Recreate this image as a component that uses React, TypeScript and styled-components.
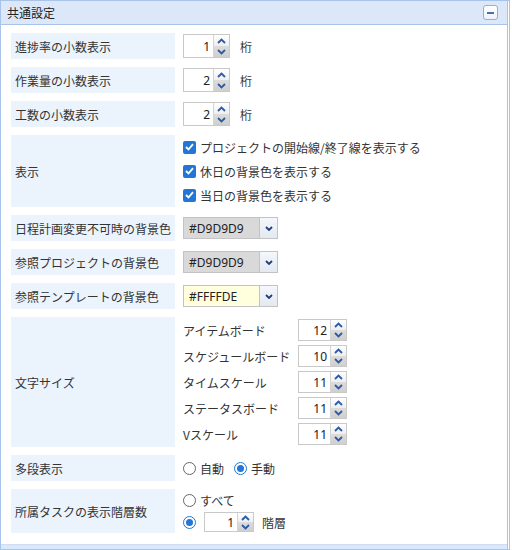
import React from 'react';
import styled, { createGlobalStyle } from 'styled-components';

const GlobalStyle = createGlobalStyle`
    body {
        margin: 0;
        background: #ffffff;
        font-family: "Noto Sans CJK JP", "Noto Sans", sans-serif;
        font-size: 12px;
        color: #333333;
    }
`;

const Panel = styled.div`
    width: 510px;
    height: 550px;
    box-sizing: border-box;
    border: 1px solid #a9c4ea;
    border-right: 3px double #a9c4ea;
    display: flex;
    flex-direction: column;
    background: #ffffff;
`;

const Header = styled.div`
    height: 23px;
    background: #dce8f8;
    border-bottom: 1px solid #a9c4ea;
    display: flex;
    align-items: center;
    justify-content: space-between;
    padding: 0 9px 0 6px;
    font-size: 12px;
    color: #222;
`;

const CollapseButton = styled.div`
    width: 13px;
    height: 13px;
    border: 1px solid #8fb0dd;
    border-radius: 3px;
    background: linear-gradient(#ffffff, #eef3fb);
    display: flex;
    align-items: center;
    justify-content: center;

    &::after {
        content: '';
        width: 7px;
        height: 2px;
        background: #4a6ea8;
    }
`;

const Body = styled.div`
    flex: 1;
    display: flex;
    flex-direction: column;
    gap: 8px;
    padding: 8px 0 0 10px;
`;

const Footer = styled.div`
    height: 4px;
    background: #dce8f8;
    border-top: 1px solid #cfdef3;
`;

const Row = styled.div`
    display: grid;
    grid-template-columns: 164px auto;
    column-gap: 8px;
`;

const Label = styled.div<{ h: number }>`
    height: ${p => p.h}px;
    background: #ebf3fd;
    display: flex;
    align-items: center;
    padding-left: 4px;
    white-space: nowrap;
`;

const Value = styled.div`
    display: flex;
    align-items: center;
    gap: 10px;
`;

const Lines = styled.div<{ line: number }>`
    display: grid;
    grid-auto-rows: ${p => p.line}px;
    align-items: center;
`;

const Inline = styled.div<{ gap?: number }>`
    display: flex;
    align-items: center;
    gap: ${p => p.gap ?? 4}px;
`;

const SpinBox = styled.div<{ h: number; w: number }>`
    display: flex;
    height: ${p => p.h}px;
    width: ${p => p.w}px;
    box-sizing: border-box;
    border: 1px solid #c9c9c9;
    background: #ffffff;
`;

const SpinValue = styled.div`
    flex: 1;
    display: flex;
    align-items: center;
    justify-content: flex-end;
    padding-right: 3px;
    font-family: "Noto Sans", sans-serif;
    font-size: 12px;
    color: #222;
`;

const SpinArrows = styled.div`
    width: 15px;
    display: flex;
    flex-direction: column;
    border-left: 1px solid #d4d4d4;
`;

const ArrowHalf = styled.div<{ down?: boolean }>`
    flex: 1;
    display: flex;
    align-items: center;
    justify-content: center;
    background: ${p => (p.down ? 'linear-gradient(#dcdcdc, #cfcfcf)' : 'linear-gradient(#ffffff, #eeeeee)')};
`;

const Unit = styled.span`
    white-space: nowrap;
`;

const Chevron = ({ up }: { up?: boolean }) => (
    <svg width="9" height="6" viewBox="0 0 9 6">
        <path
            d={up ? 'M1 5 L4.5 1.5 L8 5' : 'M1 1 L4.5 4.5 L8 1'}
            fill="none"
            stroke="#2a5aa8"
            strokeWidth="1.8"
        />
    </svg>
);

const Spinner = (props: { value: number; h?: number; w?: number }) => (
    <SpinBox h={props.h ?? 24} w={props.w ?? 47}>
        <SpinValue>{props.value}</SpinValue>
        <SpinArrows>
            <ArrowHalf><Chevron up /></ArrowHalf>
            <ArrowHalf down><Chevron /></ArrowHalf>
        </SpinArrows>
    </SpinBox>
);

const ColorBox = styled.div<{ color: string }>`
    display: flex;
    width: 95px;
    height: 22px;
    box-sizing: border-box;
    border: 1px solid #c3c3c3;
    background: ${p => p.color};
`;

const ColorText = styled.div`
    flex: 1;
    display: flex;
    align-items: center;
    padding-left: 5px;
    font-family: "Noto Sans", sans-serif;
    font-size: 12px;
    color: #222;
`;

const DropButton = styled.div`
    width: 17px;
    border-left: 1px solid #c3c3c3;
    background: linear-gradient(#f4f7fb, #e3e9f2);
    display: flex;
    align-items: center;
    justify-content: center;
`;

const ColorSelect = ({ color }: { color: string }) => (
    <ColorBox color={color}>
        <ColorText>{color}</ColorText>
        <DropButton>
            <svg width="8" height="5" viewBox="0 0 8 5">
                <path d="M1 1 L4 4 L7 1" fill="none" stroke="#1f3f7a" strokeWidth="1.8" />
            </svg>
        </DropButton>
    </ColorBox>
);

const CheckMark = styled.span`
    width: 13px;
    height: 13px;
    border-radius: 2px;
    background: #2277d6;
    display: inline-flex;
    align-items: center;
    justify-content: center;
    flex-shrink: 0;
`;

const Check = ({ text }: { text: string }) => (
    <Inline gap={4}>
        <CheckMark>
            <svg width="9" height="8" viewBox="0 0 9 8">
                <path d="M1 4 L3.5 6.5 L8 1.2" fill="none" stroke="#ffffff" strokeWidth="1.8" />
            </svg>
        </CheckMark>
        <span>{text}</span>
    </Inline>
);

const RadioDot = styled.span<{ on?: boolean }>`
    width: 13px;
    height: 13px;
    box-sizing: border-box;
    border-radius: 50%;
    border: 1px solid ${p => (p.on ? '#2277d6' : '#666666')};
    background: #ffffff;
    display: inline-flex;
    align-items: center;
    justify-content: center;
    flex-shrink: 0;

    &::after {
        content: '';
        width: 7px;
        height: 7px;
        border-radius: 50%;
        background: ${p => (p.on ? '#2277d6' : 'transparent')};
    }
`;

const Radio = ({ text, on }: { text?: string; on?: boolean }) => (
    <Inline gap={4}>
        <RadioDot on={on} />
        {text && <span>{text}</span>}
    </Inline>
);

const FontGrid = styled.div`
    display: grid;
    grid-template-columns: 115px auto;
    grid-auto-rows: 26px;
    align-items: center;
`;

const fontSizes: [string, number][] = [
    ['アイテムボード', 12],
    ['スケジュールボード', 10],
    ['タイムスケール', 11],
    ['ステータスボード', 11],
    ['Vスケール', 11],
];

const App = () => (
    <>
        <GlobalStyle />
        <Panel>
            <Header>
                <span>共通設定</span>
                <CollapseButton />
            </Header>
            <Body>
                <Row>
                    <Label h={26}>進捗率の小数表示</Label>
                    <Value><Spinner value={1} /><Unit>桁</Unit></Value>
                </Row>
                <Row>
                    <Label h={26}>作業量の小数表示</Label>
                    <Value><Spinner value={2} /><Unit>桁</Unit></Value>
                </Row>
                <Row>
                    <Label h={26}>工数の小数表示</Label>
                    <Value><Spinner value={2} /><Unit>桁</Unit></Value>
                </Row>
                <Row>
                    <Label h={72}>表示</Label>
                    <Lines line={24}>
                        <Check text="プロジェクトの開始線/終了線を表示する" />
                        <Check text="休日の背景色を表示する" />
                        <Check text="当日の背景色を表示する" />
                    </Lines>
                </Row>
                <Row>
                    <Label h={26}>日程計画変更不可時の背景色</Label>
                    <Value><ColorSelect color="#D9D9D9" /></Value>
                </Row>
                <Row>
                    <Label h={26}>参照プロジェクトの背景色</Label>
                    <Value><ColorSelect color="#D9D9D9" /></Value>
                </Row>
                <Row>
                    <Label h={26}>参照テンプレートの背景色</Label>
                    <Value><ColorSelect color="#FFFFDE" /></Value>
                </Row>
                <Row>
                    <Label h={130}>文字サイズ</Label>
                    <FontGrid>
                        {fontSizes.map(([name, size]) => (
                            <React.Fragment key={name}>
                                <span>{name}</span>
                                <Spinner value={size} h={22} w={49} />
                            </React.Fragment>
                        ))}
                    </FontGrid>
                </Row>
                <Row>
                    <Label h={26}>多段表示</Label>
                    <Value>
                        <Inline gap={10}>
                            <Radio text="自動" />
                            <Radio text="手動" on />
                        </Inline>
                    </Value>
                </Row>
                <Row>
                    <Label h={44}>所属タスクの表示階層数</Label>
                    <Lines line={22}>
                        <Radio text="すべて" />
                        <Inline gap={8}>
                            <Radio on />
                            <Spinner value={1} h={20} w={50} />
                            <Unit>階層</Unit>
                        </Inline>
                    </Lines>
                </Row>
            </Body>
            <Footer />
        </Panel>
    </>
);

export default App;
